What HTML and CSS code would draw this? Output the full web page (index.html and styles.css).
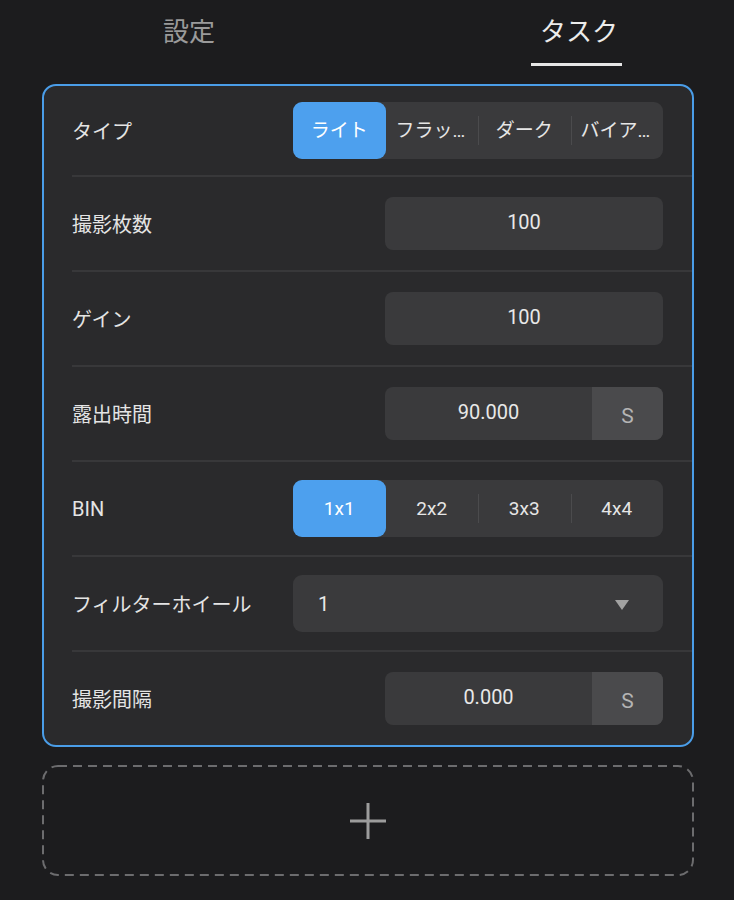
FILE: index.html
```html
<!DOCTYPE html>
<html lang="ja">
<head>
  <meta charset="UTF-8" />
  <meta name="viewport" content="width=device-width, initial-scale=1.0"/>
  <title>タスク</title>
  <link rel="stylesheet" href="styles.css">
</head>
<body>
  <div class="tabs">
    <div class="tab">設定</div>
    <div class="tab active">タスク</div>
  </div>

  <div class="task-card">
    <div class="row first">
      <span class="label">タイプ</span>
      <div class="segmented">
        <div class="seg selected">ライト</div>
        <div class="seg">フラット</div>
        <div class="seg">ダーク</div>
        <div class="seg">バイアス</div>
      </div>
    </div>

    <div class="row">
      <span class="label">撮影枚数</span>
      <div class="field"><span class="value">100</span></div>
    </div>

    <div class="row">
      <span class="label">ゲイン</span>
      <div class="field"><span class="value">100</span></div>
    </div>

    <div class="row">
      <span class="label">露出時間</span>
      <div class="field"><span class="value">90.000</span><span class="unit">s</span></div>
    </div>

    <div class="row">
      <span class="label">BIN</span>
      <div class="segmented">
        <div class="seg selected">1x1</div>
        <div class="seg">2x2</div>
        <div class="seg">3x3</div>
        <div class="seg">4x4</div>
      </div>
    </div>

    <div class="row">
      <span class="label">フィルターホイール</span>
      <div class="dropdown">
        <span>1</span>
        <span class="caret"></span>
      </div>
    </div>

    <div class="row last">
      <span class="label">撮影間隔</span>
      <div class="field"><span class="value">0.000</span><span class="unit">s</span></div>
    </div>
  </div>

  <div class="add-task">
    <svg class="dash" width="100%" height="100%">
      <rect x="1" y="1" width="calc(100% - 2px)" height="calc(100% - 2px)" rx="15" ry="15" />
    </svg>
    <svg width="36" height="36" viewBox="0 0 36 36">
      <path d="M18 0V36M0 18H36" stroke="#9c9c9c" stroke-width="3" />
    </svg>
  </div>
</body>
</html>
```

FILE: styles.css
```css
body {
  margin: 0;
  background: #1c1c1e;
  font-family: Roboto, "Noto Sans CJK JP", sans-serif;
  color: #e6e6e6;
}

.tabs {
  display: flex;
  justify-content: space-between;
  padding: 0 112px 0 163px;
  height: 66px;
}
.tab {
  padding: 14px 0 13px;
  line-height: 36px;
  font-size: 26px;
  color: #9a9a9a;
  border-bottom: 3px solid transparent;
}
.tab.active {
  color: #ececec;
  padding: 14px 4px 13px 9px;
  border-bottom-color: #e6e6e6;
}

.task-card {
  margin: 18px 40px 0 42px;
  background: #2a2a2c;
  border: 2px solid #4a9de8;
  border-radius: 14px;
}
.row {
  display: flex;
  align-items: center;
  justify-content: space-between;
  height: 93px;
  margin-left: 28px;
  padding-right: 29px;
  border-bottom: 2px solid #38383a;
}
.row.first {
  height: 89px;
}
.row.last {
  height: 93px;
  border-bottom: none;
}
.label {
  font-size: 20px;
  color: #e4e4e4;
}

.segmented {
  display: flex;
  width: 370px;
  height: 57px;
  background: #3a3a3c;
  border-radius: 9px;
}
.seg {
  position: relative;
  flex: 1;
  min-width: 0;
  padding: 0 10px;
  line-height: 57px;
  font-size: 19px;
  text-align: center;
  white-space: nowrap;
  overflow: hidden;
  text-overflow: ellipsis;
  color: #e6e6e6;
  border-radius: 9px;
}
.seg + .seg:not(:nth-child(2))::before {
  content: "";
  position: absolute;
  left: 0;
  top: 14px;
  height: 29px;
  border-left: 1px solid #4b4b4d;
}
.seg.selected {
  background: #4da0ee;
  color: #fff;
}

.field {
  display: flex;
  width: 278px;
  height: 53px;
  background: #3a3a3c;
  border-radius: 8px;
  overflow: hidden;
}
.value {
  flex: 1;
  line-height: 51px;
  text-align: center;
  font-size: 20px;
  color: #e8e8e8;
}
.unit {
  width: 71px;
  line-height: 58px;
  text-align: center;
  font-size: 21px;
  text-transform: uppercase;
  color: #b4b4b4;
  background: #4a4a4c;
}

.dropdown {
  display: flex;
  align-items: center;
  justify-content: space-between;
  width: 370px;
  height: 57px;
  box-sizing: border-box;
  padding: 0 34px 0 25px;
  background: #3a3a3c;
  border-radius: 9px;
  font-size: 20px;
  color: #e8e8e8;
}
.caret {
  width: 0;
  height: 0;
  border-left: 7.5px solid transparent;
  border-right: 7.5px solid transparent;
  border-top: 10px solid #a2a2a2;
  margin-top: 2px;
}

.add-task {
  position: relative;
  display: flex;
  align-items: center;
  justify-content: center;
  margin: 18px 40px 0 42px;
  height: 111px;
}
.dash {
  position: absolute;
  left: 0;
  top: 0;
}
.dash rect {
  fill: none;
  stroke: #6c6c6e;
  stroke-width: 2;
  stroke-dasharray: 9 6;
}
```
